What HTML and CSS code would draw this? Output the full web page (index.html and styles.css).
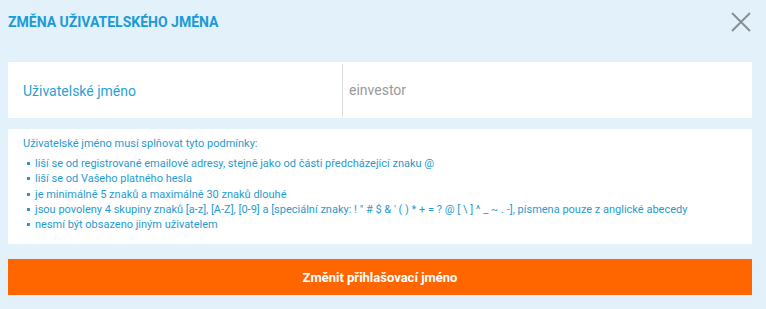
FILE: index.html
```html
<!DOCTYPE html>
<html lang="cs">
<head>
  <meta charset="UTF-8">
  <meta name="viewport" content="width=device-width, initial-scale=1.0">
  <title>Změna uživatelského jména</title>
  <link rel="stylesheet" href="styles.css">
</head>
<body>

  <div class="dialog">
    <div class="hlavicka">
      <h1>Změna uživatelského jména</h1>
      <button class="btn-zavrit" aria-label="Zavřít">
        <svg width="20" height="20" viewBox="0 0 20 20">
          <path d="M1 1 L19 19 M19 1 L1 19" stroke="#8a8e95" stroke-width="2" fill="none"/>
        </svg>
      </button>
    </div>

    <div class="radek">
      <label class="popisek" for="jmeno">Uživatelské jméno</label>
      <input class="hodnota" id="jmeno" type="text" placeholder="einvestor">
    </div>

    <div class="podminky">
      <p>Uživatelské jméno musí splňovat tyto podmínky:</p>
      <ul>
        <li>liší se od registrované emailové adresy, stejně jako od části předcházející znaku @</li>
        <li>liší se od Vašeho platného hesla</li>
        <li>je minimálně 5 znaků a maximálně 30 znaků dlouhé</li>
        <li>jsou povoleny 4 skupiny znaků [a-z], [A-Z], [0-9] a [speciální znaky: ! " # $ &amp; ' ( ) * + = ? @ [ \ ] ^ _ ~ . -], písmena pouze z anglické abecedy</li>
        <li>nesmí být obsazeno jiným uživatelem</li>
      </ul>
    </div>

    <button class="btn-zmenit">Změnit přihlašovací jméno</button>
  </div>

</body>
</html>
```

FILE: styles.css
```css
body {
  margin: 0;
  background: #e3f1fb;
  font-family: Roboto, "Liberation Sans", sans-serif;
}

.dialog {
  padding: 0 14px 0 8px;
}

.hlavicka {
  display: flex;
  justify-content: space-between;
  align-items: center;
  height: 44px;
}

.hlavicka h1 {
  margin: 0;
  font-size: 14px;
  font-weight: bold;
  text-transform: uppercase;
  color: #1a9ad6;
}

.btn-zavrit {
  background: none;
  border: none;
  padding: 0;
  margin-right: 1px;
  cursor: pointer;
  display: flex;
}

.radek {
  display: flex;
  align-items: stretch;
  height: 56px;
  margin-top: 18px;
  background: #fff;
}

.popisek {
  width: 319px;
  padding-left: 15px;
  display: flex;
  align-items: center;
  font-size: 14px;
  color: #2b9fd3;
  border-right: 1px solid #dcdcdc;
  margin: 2px 0 1px;
}

.hodnota {
  flex: 1;
  border: none;
  outline: none;
  padding: 0 6px;
  font-family: inherit;
  font-size: 14px;
  color: #999;
}

.hodnota::placeholder {
  color: #999;
}

.podminky {
  margin-top: 11px;
  background: #fff;
  padding: 7px 15px 12px;
  font-size: 11px;
  color: #1f9bd1;
}

.podminky p {
  margin: 0 0 5px;
  line-height: 15px;
}

.podminky ul {
  margin: 0;
  padding: 0;
  list-style: none;
  line-height: 15.3px;
}

.podminky li {
  display: flex;
  align-items: center;
  padding-left: 4px;
}

.podminky li::before {
  content: "";
  flex: none;
  width: 3px;
  height: 3px;
  margin-right: 5px;
  background: #1f9bd1;
}

.btn-zmenit {
  display: block;
  width: 100%;
  height: 36px;
  margin-top: 15px;
  border: none;
  background: #ff6600;
  color: #fff;
  font-family: inherit;
  font-size: 13px;
  font-weight: bold;
  cursor: pointer;
}
```
